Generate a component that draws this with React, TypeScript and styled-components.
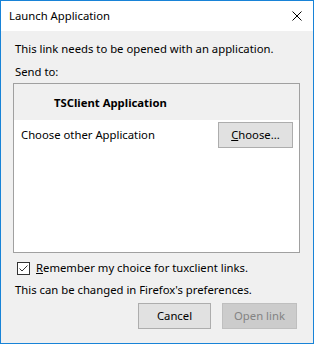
import React from 'react';
import styled, { createGlobalStyle } from 'styled-components';

const GlobalStyle = createGlobalStyle`
	html, body {
		margin: 0;
		padding: 0;
		background: #ffffff;
	}
	body {
		font-family: 'Noto Sans', 'Open Sans', sans-serif;
		font-size: 11.3px;
		color: #000000;
	}
`;

const Window = styled.div`
	width: 314px;
	height: 344px;
	box-sizing: border-box;
	border: 1px solid #1883d7;
	background: #f0f0f0;
	display: flex;
	flex-direction: column;
`;

const TitleBar = styled.div`
	height: 30px;
	background: #ffffff;
	display: flex;
	align-items: center;
	justify-content: space-between;
	padding: 0 10px 0 8px;
	flex-shrink: 0;
`;

const Title = styled.span`
	line-height: 16px;
`;

const CloseButton = styled.div`
	width: 12px;
	height: 12px;
	display: flex;
	align-items: center;
	justify-content: center;
`;

const Body = styled.div`
	flex: 1;
	display: flex;
	flex-direction: column;
	padding: 10px 13px 0 12px;
`;

const Line = styled.div<{ $top?: number }>`
	line-height: 16px;
	padding-left: 2px;
	margin-top: ${(p) => p.$top ?? 0}px;
	white-space: nowrap;
`;

const ListBox = styled.div`
	margin-top: 3px;
	height: 170px;
	box-sizing: border-box;
	border: 1px solid #a0a0a0;
	background: #ffffff;
	display: flex;
	flex-direction: column;
`;

const HandlerRow = styled.div`
	height: 36px;
	background: #f0f0f0;
	display: flex;
	align-items: center;
	padding-left: 40px;
	font-weight: 700;
`;

const ChooseRow = styled.div`
	height: 29px;
	display: flex;
	align-items: center;
	justify-content: space-between;
	padding: 0 6px 0 7px;
`;

const Button = styled.button<{ $width: number; $disabled?: boolean }>`
	width: ${(p) => p.$width}px;
	height: 26px;
	box-sizing: border-box;
	border: 1px solid ${(p) => (p.$disabled ? '#bfbfbf' : '#adadad')};
	background: ${(p) => (p.$disabled ? '#cccccc' : '#e1e1e1')};
	color: ${(p) => (p.$disabled ? '#838383' : '#000000')};
	font-family: inherit;
	font-size: inherit;
	padding: 0;
	line-height: 16px;
`;

const CheckRow = styled.label`
	display: flex;
	align-items: center;
	gap: 6px;
	margin-top: 7px;
	padding-left: 4px;
	line-height: 16px;
`;

const CheckBox = styled.span`
	width: 13px;
	height: 13px;
	box-sizing: border-box;
	border: 1px solid #333333;
	background: #ffffff;
	display: flex;
	align-items: center;
	justify-content: center;
`;

const Footer = styled.div`
	display: flex;
	justify-content: flex-end;
	gap: 11px;
	margin-top: 5px;
	padding-right: 3px;
`;

const Key = styled.span`
	text-decoration: underline;
`;

export default function App() {
	return (
		<>
			<GlobalStyle />
			<Window>
				<TitleBar>
					<Title>Launch Application</Title>
					<CloseButton>
						<svg width="10" height="10" viewBox="0 0 10 10">
							<path d="M0.5 0.5 L9.5 9.5 M9.5 0.5 L0.5 9.5" stroke="#000" strokeWidth="1" />
						</svg>
					</CloseButton>
				</TitleBar>
				<Body>
					<Line>This link needs to be opened with an application.</Line>
					<Line $top={7}>Send to:</Line>
					<ListBox>
						<HandlerRow>TSClient Application</HandlerRow>
						<ChooseRow>
							<span>Choose other Application</span>
							<Button $width={75}>
								<Key>C</Key>hoose...
							</Button>
						</ChooseRow>
					</ListBox>
					<CheckRow>
						<CheckBox>
							<svg width="11" height="11" viewBox="0 0 11 11">
								<path d="M1.5 5.5 L4 8 L9.5 2.5" stroke="#333" strokeWidth="1" fill="none" />
							</svg>
						</CheckBox>
						<span>
							<Key>R</Key>emember my choice for tuxclient links.
						</span>
					</CheckRow>
					<Line $top={6}>This can be changed in Firefox's preferences.</Line>
					<Footer>
						<Button $width={73}>Cancel</Button>
						<Button $width={75} $disabled>
							Open link
						</Button>
					</Footer>
				</Body>
			</Window>
		</>
	);
}
